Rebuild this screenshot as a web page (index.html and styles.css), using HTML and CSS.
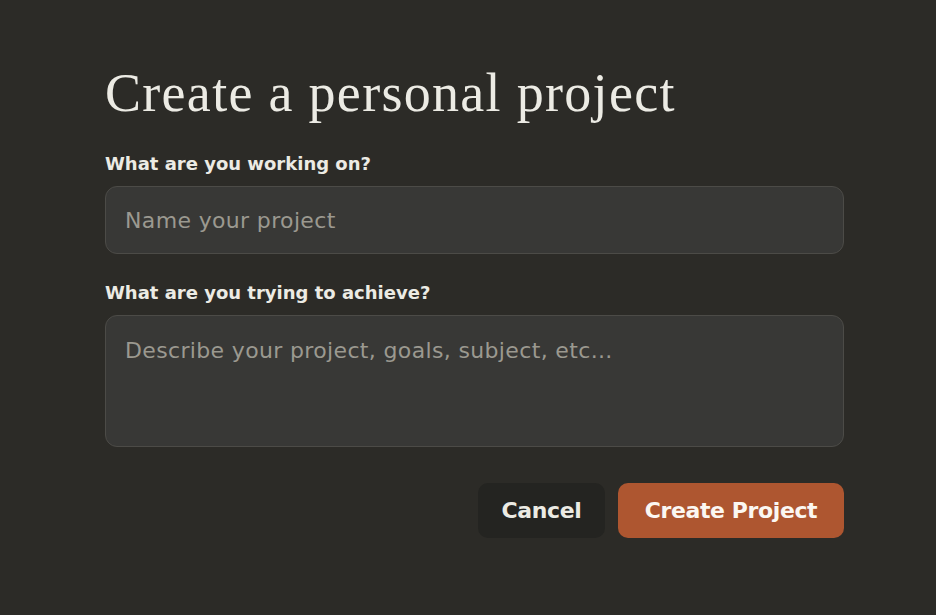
FILE: index.html
```html
<!DOCTYPE html>
<html>
<head>
<meta charset="utf-8">
<link rel="stylesheet" href="styles.css">
</head>
<body>
<main class="page">
  <h1 class="title">Create a personal project</h1>
  <form class="form">
    <label class="label" for="name">What are you working on?</label>
    <input class="field" id="name" type="text" placeholder="Name your project">
    <label class="label label-second" for="desc">What are you trying to achieve?</label>
    <textarea class="field area" id="desc" placeholder="Describe your project, goals, subject, etc..."></textarea>
    <div class="actions">
      <button type="button" class="btn btn-cancel">Cancel</button>
      <button type="button" class="btn btn-create">Create Project</button>
    </div>
  </form>
</main>
</body>
</html>
```

FILE: styles.css
```css
html, body {
  margin: 0;
  padding: 0;
  background: #2c2b27;
  height: 100%;
}
.page {
  width: 739px;
  margin-left: 105px;
  padding-top: 62px;
  font-family: "DejaVu Sans", "Inter", sans-serif;
}
.title {
  margin: 0;
  font-family: "Liberation Serif", "DejaVu Serif", serif;
  font-weight: 400;
  font-size: 54px;
  line-height: 62px;
  color: #ecebe4;
  letter-spacing: 1.3px;
}
.form {
  display: flex;
  flex-direction: column;
  margin-top: 28px;
}
.label {
  font-size: 18px;
  font-weight: 700;
  color: #ecebe4;
  line-height: 24px;
  letter-spacing: 0;
}
.label-second {
  margin-top: 27px;
}
.field {
  box-sizing: border-box;
  margin-top: 10px;
  width: 100%;
  height: 68px;
  background: #383836;
  border: 1px solid #4c4b47;
  border-radius: 12px;
  padding: 0 19px;
  font-family: "DejaVu Sans", "Inter", sans-serif;
  font-size: 22px;
  letter-spacing: 0.35px;
  color: #ecebe4;
  outline: none;
}
.field::placeholder {
  color: #9b9990;
}
.area {
  height: 132px;
  padding: 19px 19px;
  resize: none;
  line-height: 32px;
}
.actions {
  display: flex;
  justify-content: flex-end;
  gap: 13px;
  margin-top: 36px;
}
.btn {
  height: 55px;
  border: none;
  border-radius: 10px;
  font-family: "DejaVu Sans", "Inter", sans-serif;
  font-size: 22px;
  font-weight: 700;
  color: #ecebe4;
  padding: 0;
  letter-spacing: -0.4px;
}
.btn-cancel {
  background: #242421;
  width: 127px;
}
.btn-create {
  background: #ae5630;
  width: 226px;
  color: #fbf7f2;
}
```
